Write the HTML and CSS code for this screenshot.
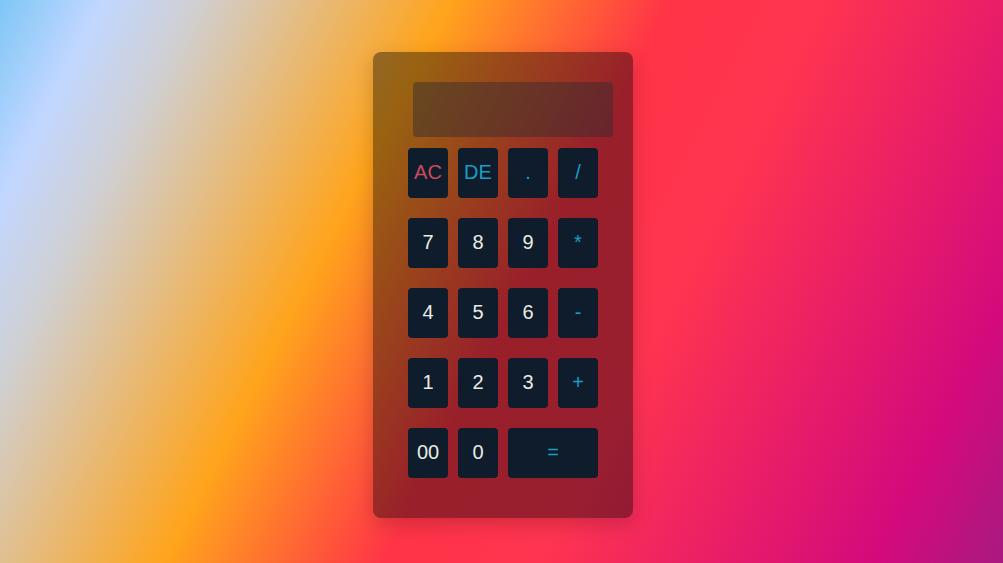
FILE: index.html
```html
<!DOCTYPE html>
<html>
<head>
<meta charset="utf-8">
<link rel="stylesheet" href="styles.css">
</head>
<body>
<div class="calc">
  <div class="display"></div>
  <div class="keys">
    <button class="key clear">AC</button>
    <button class="key op">DE</button>
    <button class="key op">.</button>
    <button class="key op">/</button>
    <button class="key">7</button>
    <button class="key">8</button>
    <button class="key">9</button>
    <button class="key op">*</button>
    <button class="key">4</button>
    <button class="key">5</button>
    <button class="key">6</button>
    <button class="key op">-</button>
    <button class="key">1</button>
    <button class="key">2</button>
    <button class="key">3</button>
    <button class="key op">+</button>
    <button class="key">00</button>
    <button class="key">0</button>
    <button class="key op wide">=</button>
  </div>
</div>
</body>
</html>
```

FILE: styles.css
```css
html, body {
  margin: 0;
  padding: 0;
  height: 100%;
}
body {
  background: linear-gradient(117deg, #7ec6f6 0%, #c2d7ff 8%, #cfd0d4 15%, #ffa41c 35%, #ff3447 52%, #ff3450 64%, #d40a7c 90%, #a81a80 100%);
  display: flex;
  justify-content: center;
  align-items: flex-start;
  font-family: "Liberation Sans", Arial, sans-serif;
}
.calc {
  margin-top: 52px;
  margin-left: 3px;
  width: 260px;
  height: 466px;
  box-sizing: border-box;
  padding: 30px 0 0 35px;
  background: rgba(0, 0, 0, 0.4);
  border-radius: 8px;
  box-shadow: 0 6px 20px rgba(0, 0, 0, 0.18);
}
.display {
  margin-left: 5px;
  width: 200px;
  height: 55px;
  background: rgba(50, 44, 46, 0.47);
  border-radius: 4px;
  margin-bottom: 11px;
}
.keys {
  display: grid;
  grid-template-columns: repeat(4, 40px);
  grid-auto-rows: 50px;
  column-gap: 10px;
  row-gap: 20px;
}
.key {
  border: none;
  margin: 0;
  padding: 0 0 2px 0;
  background: #0e1c2b;
  border-radius: 4px;
  color: #ebebe4;
  font-family: "Liberation Sans", Arial, sans-serif;
  font-size: 20px;
  line-height: 1;
}
.key.op {
  color: #1a9fc4;
}
.key.clear {
  color: #cc4a5e;
}
.key.wide {
  grid-column: span 2;
}
```
